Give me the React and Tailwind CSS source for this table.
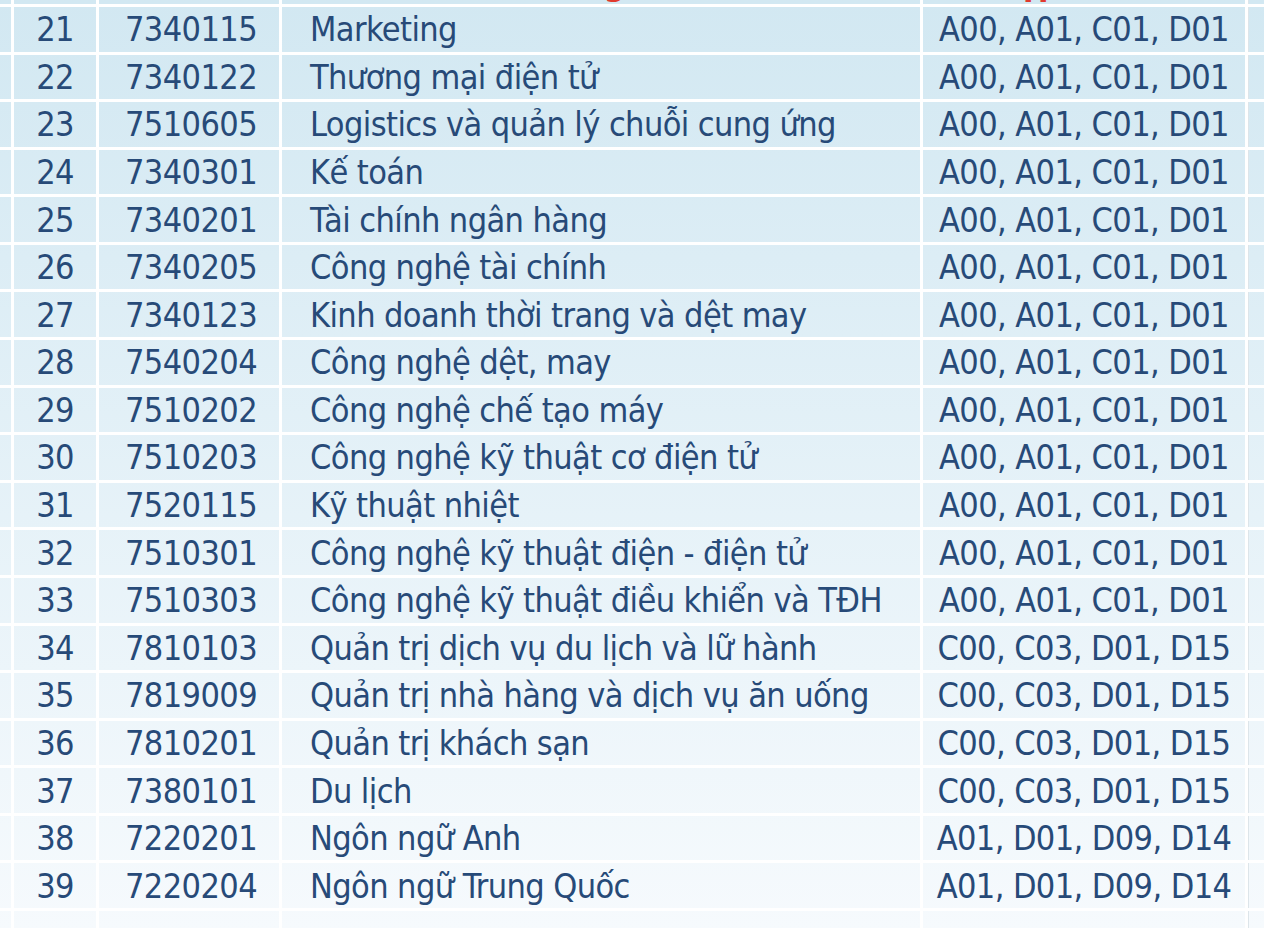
const rows = [
  [21, '7340115', 'Marketing', 'A00, A01, C01, D01'],
  [22, '7340122', 'Thương mại điện tử', 'A00, A01, C01, D01'],
  [23, '7510605', 'Logistics và quản lý chuỗi cung ứng', 'A00, A01, C01, D01'],
  [24, '7340301', 'Kế toán', 'A00, A01, C01, D01'],
  [25, '7340201', 'Tài chính ngân hàng', 'A00, A01, C01, D01'],
  [26, '7340205', 'Công nghệ tài chính', 'A00, A01, C01, D01'],
  [27, '7340123', 'Kinh doanh thời trang và dệt may', 'A00, A01, C01, D01'],
  [28, '7540204', 'Công nghệ dệt, may', 'A00, A01, C01, D01'],
  [29, '7510202', 'Công nghệ chế tạo máy', 'A00, A01, C01, D01'],
  [30, '7510203', 'Công nghệ kỹ thuật cơ điện tử', 'A00, A01, C01, D01'],
  [31, '7520115', 'Kỹ thuật nhiệt', 'A00, A01, C01, D01'],
  [32, '7510301', 'Công nghệ kỹ thuật điện - điện tử', 'A00, A01, C01, D01'],
  [33, '7510303', 'Công nghệ kỹ thuật điều khiển và TĐH', 'A00, A01, C01, D01'],
  [34, '7810103', 'Quản trị dịch vụ du lịch và lữ hành', 'C00, C03, D01, D15'],
  [35, '7819009', 'Quản trị nhà hàng và dịch vụ ăn uống', 'C00, C03, D01, D15'],
  [36, '7810201', 'Quản trị khách sạn', 'C00, C03, D01, D15'],
  [37, '7380101', 'Du lịch', 'C00, C03, D01, D15'],
  [38, '7220201', 'Ngôn ngữ Anh', 'A01, D01, D09, D14'],
  [39, '7220204', 'Ngôn ngữ Trung Quốc', 'A01, D01, D09, D14'],
]

function Row({ stt, code, name, combo }) {
  return (
    <div className="flex h-[47.58px] border-t-[3px] border-white">
      <div className="w-[14px] shrink-0 border-r-[3px] border-white" />
      <div className="w-[85px] shrink-0 border-r-[3px] border-white flex items-center justify-center">{stt}</div>
      <div className="w-[183px] shrink-0 border-r-[3px] border-white flex items-center justify-center pl-[4px]">{code}</div>
      <div className="w-[641px] shrink-0 border-r-[3px] border-white flex items-center pl-[28px] whitespace-nowrap">{name}</div>
      <div className="w-[325px] shrink-0 border-r-[3px] border-white flex items-center justify-center whitespace-nowrap">{combo}</div>
      <div className="flex-1 border-l border-[#dde5ea]" />
    </div>
  )
}

export default function App() {
  return (
    <div
      className="w-[1264px] h-[928px] overflow-hidden bg-gradient-to-b from-[#d2e8f2] to-[#f6fafd] text-[#274a78] text-[34px] leading-none tracking-[-0.6px]"
      style={{ fontFamily: '"DejaVu Sans Condensed", "DejaVu Sans", sans-serif' }}
    >
      {/* bottom edge of the header row, clipped by the screenshot */}
      <div className="flex h-[4px] overflow-hidden text-[#e03a2e] font-bold">
        <div className="w-[14px] shrink-0 border-r-[3px] border-white" />
        <div className="w-[85px] shrink-0 border-r-[3px] border-white" />
        <div className="w-[183px] shrink-0 border-r-[3px] border-white" />
        <div className="w-[641px] shrink-0 border-r-[3px] border-white flex justify-center">
          <span className="block mt-[-34px] leading-[34px] whitespace-nowrap">Tên ngành</span>
        </div>
        <div className="w-[325px] shrink-0 border-r-[3px] border-white flex justify-center pr-[80px]">
          <span className="block mt-[-34px] leading-[34px] whitespace-nowrap">Tổ hợp môn</span>
        </div>
        <div className="flex-1 border-l border-[#dde5ea]" />
      </div>
      {rows.map(([stt, code, name, combo]) => (
        <Row key={stt} stt={stt} code={code} name={name} combo={combo} />
      ))}
      <Row stt="" code="" name="" combo="" />
    </div>
  )
}
